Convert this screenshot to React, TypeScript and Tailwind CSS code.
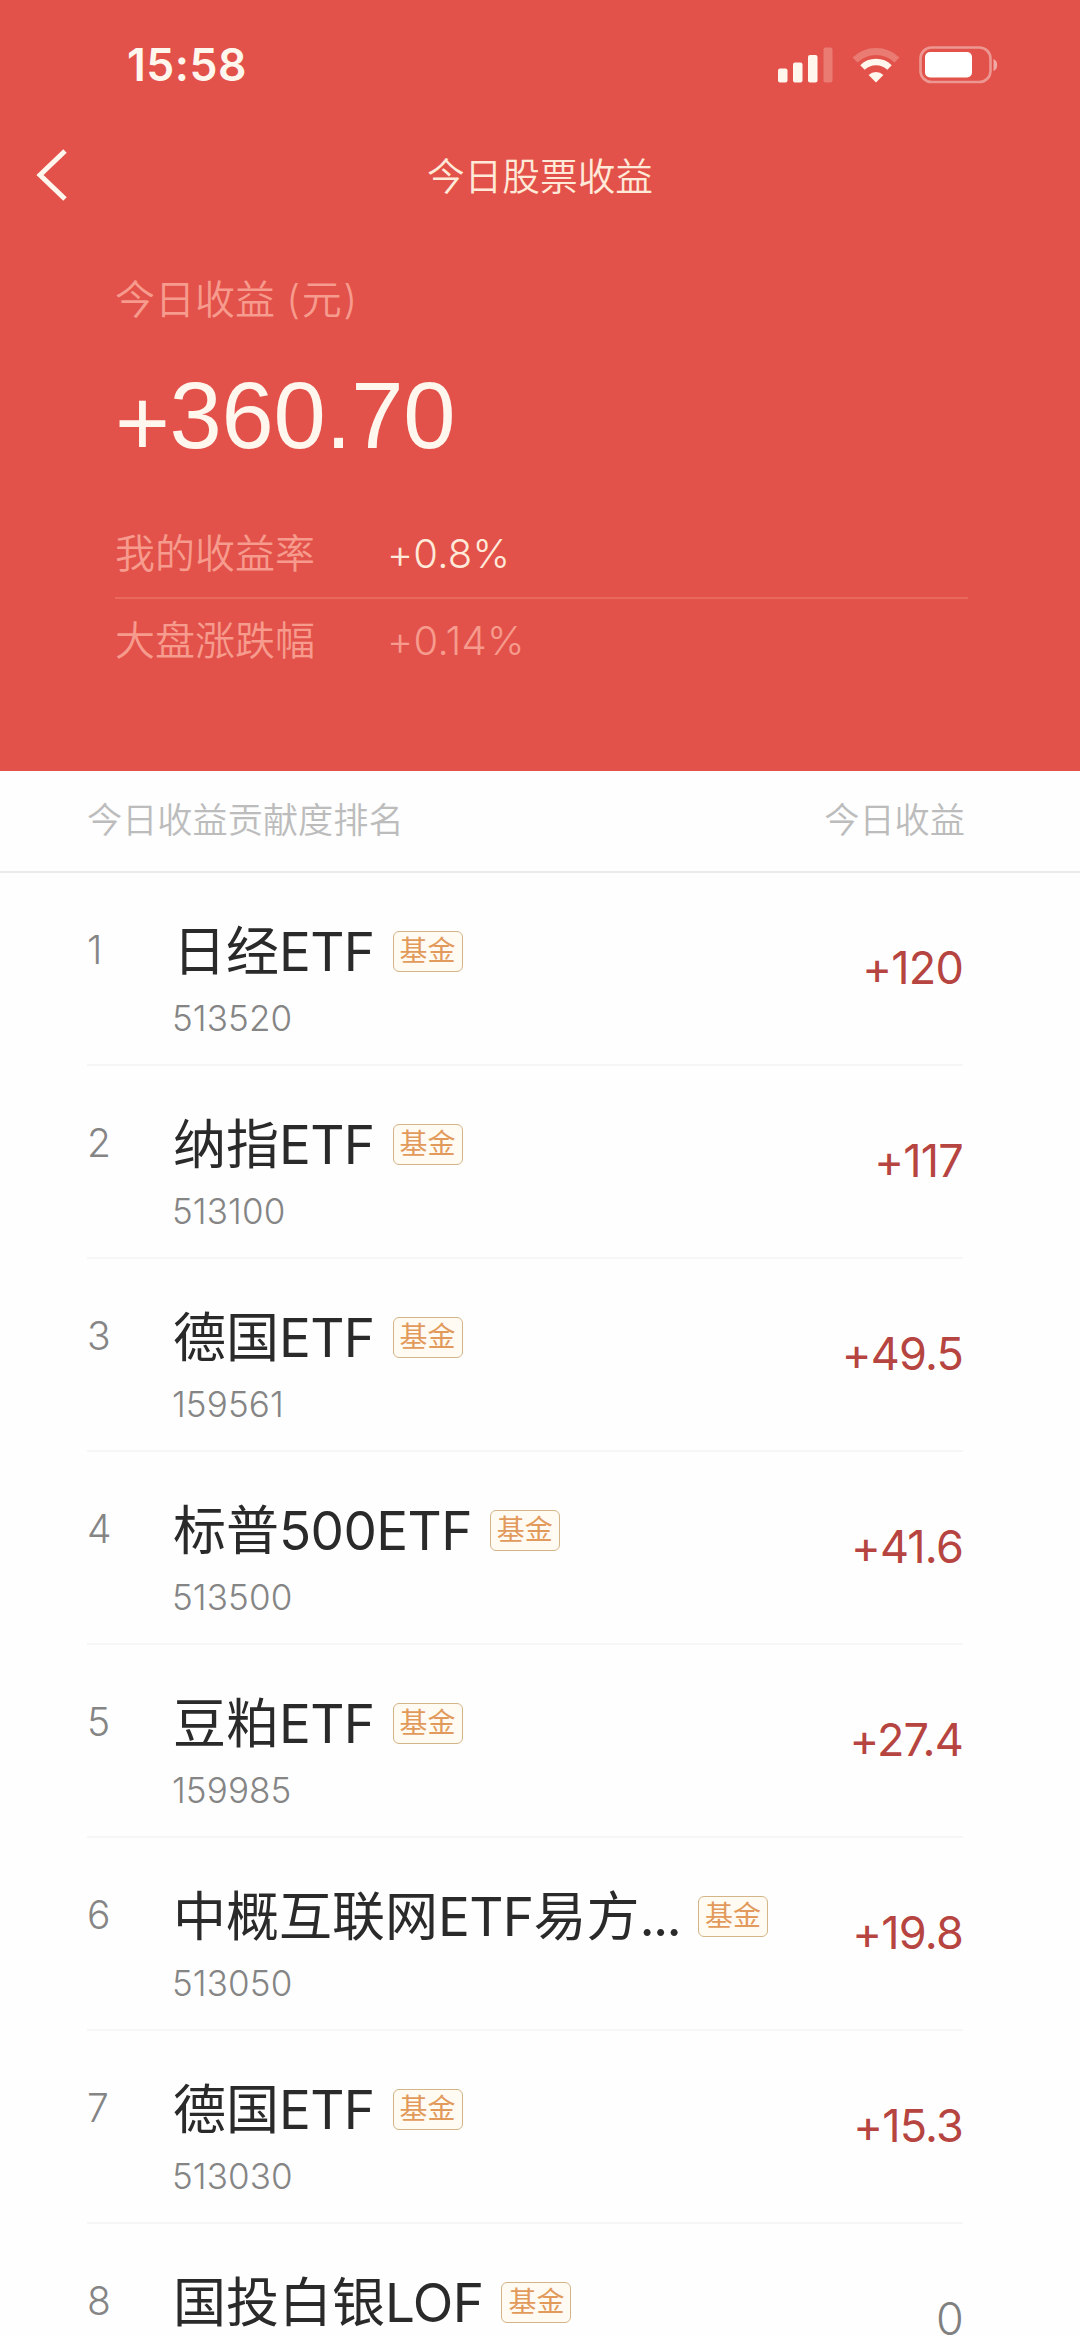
import React from 'react';

interface Holding {
  name: string;
  code?: string;
  profit: string;
}

const holdings: Holding[] = [
  { name: '日经ETF', code: '513520', profit: '+120' },
  { name: '纳指ETF', code: '513100', profit: '+117' },
  { name: '德国ETF', code: '159561', profit: '+49.5' },
  { name: '标普500ETF', code: '513500', profit: '+41.6' },
  { name: '豆粕ETF', code: '159985', profit: '+27.4' },
  { name: '中概互联网ETF易方...', code: '513050', profit: '+19.8' },
  { name: '德国ETF', code: '513030', profit: '+15.3' },
  { name: '国投白银LOF', profit: '0' },
];

const StatusBar: React.FC = () => (
  <div className="flex h-[130px] items-center justify-between pl-[127px] pr-[80px]">
    <span className="text-[44.5px] leading-[60px] font-semibold tracking-[0.5px]">15:58</span>
    <div className="flex items-center">
      <svg width="55" height="36" viewBox="0 0 55 36" fill="currentColor">
        <rect x="0" y="21.5" width="9.5" height="14" rx="2" />
        <rect x="15" y="15.5" width="9.5" height="20" rx="2" />
        <rect x="30" y="8" width="9.5" height="27.5" rx="2" />
        <rect x="45.5" y="0.5" width="9" height="35" rx="2" opacity="0.25" />
      </svg>
      <svg className="ml-[19px]" width="48" height="36" viewBox="0 0 48 36" fill="none" stroke="currentColor">
        <path d="M3 13A30 30 0 0 1 45 13" strokeWidth="7" opacity="0.25" />
        <path d="M10.5 20.5A19.5 19.5 0 0 1 37.5 20.5" strokeWidth="6.5" />
        <path d="M24 35.5L16.6 28A10.5 10.5 0 0 1 31.4 28Z" fill="currentColor" stroke="none" />
      </svg>
      <svg className="ml-[19px]" width="81" height="38" viewBox="0 0 81 38" fill="none">
        <rect x="1.5" y="1.5" width="70" height="34.5" rx="11" stroke="#fff" strokeWidth="2.6" opacity="0.4" />
        <rect x="6" y="6" width="47" height="25.5" rx="5" fill="#fff" />
        <path d="M74.5 13a6 6.5 0 0 1 0 12z" fill="#fff" opacity="0.5" />
      </svg>
    </div>
  </div>
);

const FundTag: React.FC = () => (
  <span className="flex h-[41px] w-[70px] items-center justify-center rounded-[6px] border-[1.5px] border-[#d3b587] bg-[#fffbf2] text-[28px] leading-[28px] text-[#e29a5c]">
    基金
  </span>
);

const HoldingRow: React.FC<{ rank: number; item: Holding }> = ({ rank, item }) => (
  <li className="flex h-[193px] shrink-0 border-b-2 border-[#f6f6f6]">
    <span className="w-[86px] pt-[47px] text-[39px] leading-[60px] font-light text-[#858585]">{rank}</span>
    <div className="flex-1">
      <div className="flex items-center pt-[48px]">
        <span className="pt-[3px] text-[53px] leading-[57px] text-[#2a2a2a]">
          {/* latin runs are set a little tighter than the hanzi */}
          {item.name.split(/([A-Z0-9]+|\.+)/).map((part, i) => (
            <span key={i} className={part === '...' ? 'tracking-[-1.8px]' : i % 2 ? 'tracking-[-0.6px]' : ''}>{part}</span>
          ))}
        </span>
        <span className="ml-[18px]"><FundTag /></span>
      </div>
      {item.code && (
        <p className="mt-[19px] -ml-px text-[35px] leading-[36px] font-light tracking-[0.1px] text-[#858585]">{item.code}</p>
      )}
    </div>
    <span className={`pt-[77px] text-[45px] leading-[36px] tracking-[-0.8px] ${item.profit === '0' ? 'font-light text-[#808080]' : 'text-[#b64440]'}`}>
      {item.profit}
    </span>
  </li>
);

const App: React.FC = () => {
  return (
    <div className="flex h-[2336px] w-[1080px] flex-col overflow-hidden bg-[#fefefe] font-[Inter,'Noto_Sans_CJK_SC',sans-serif]">
      <header className="h-[771px] shrink-0 bg-[#e2524a] text-[#fff6ee]">
        <StatusBar />

        <div className="grid h-[90px] grid-cols-3 items-center">
          <svg className="ml-[36px]" width="32" height="52" viewBox="0 0 32 52" fill="none" stroke="currentColor" strokeWidth="5">
            <path d="M29 2L4 26L29 50" />
          </svg>
          <h1 className="pt-px text-center text-[37.7px] leading-[60px] font-[350] text-[#ffe9d9]">今日股票收益</h1>
        </div>

        <div className="pt-[50px] pr-[112px] pl-[115px]">
          <p className="text-[40px] leading-[60px] font-[350] text-[#f69b8d]">
            今日收益 <span className="tracking-[1.5px]">(元)</span>
          </p>
          <p className="mt-[36px] font-['Liberation_Sans',sans-serif] text-[94px] leading-[100px] tracking-[-0.3px]">
            <span className="inline-block translate-y-[7px]">+</span>360.70
          </p>
          <div className="mt-[58px] flex h-[75px] border-b-2 border-[#e9695f] text-[40px] leading-[60px] font-[350]">
            <span className="w-[272px] text-[#f69b8d]">我的收益率</span>
            <span className="tracking-[0.2px] text-[#ffe9d9]">+0.8%</span>
          </div>
          <div className="mt-[12px] flex text-[40px] leading-[60px] font-[350] text-[#f69b8d]">
            <span className="w-[272px]">大盘涨跌幅</span>
            <span className="tracking-[0.3px]">+0.14%</span>
          </div>
        </div>
      </header>

      <div className="flex h-[102px] shrink-0 justify-between border-b-2 border-[#ebebeb] pt-[24px] pr-[115px] pl-[87px] text-[35.2px] leading-[50px] font-[350] text-[#bcbcbc]">
        <span>今日收益贡献度排名</span>
        <span>今日收益</span>
      </div>

      <ul className="mr-[117px] ml-[87px] flex flex-col">
        {holdings.map((item, idx) => (
          <HoldingRow key={idx} rank={idx + 1} item={item} />
        ))}
      </ul>
    </div>
  );
};

export default App;
